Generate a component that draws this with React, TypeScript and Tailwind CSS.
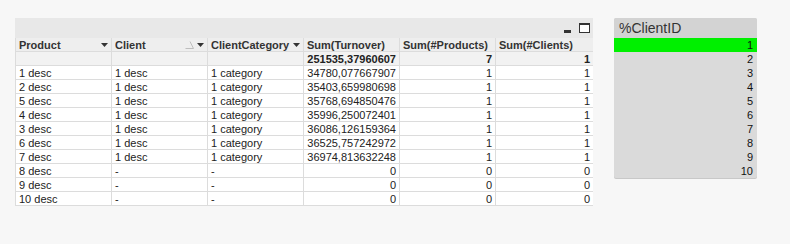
import React from "react";

const rows = [
  ["1 desc", "1 desc", "1 category", "34780,077667907", "1", "1"],
  ["2 desc", "1 desc", "1 category", "35403,659980698", "1", "1"],
  ["5 desc", "1 desc", "1 category", "35768,694850476", "1", "1"],
  ["4 desc", "1 desc", "1 category", "35996,250072401", "1", "1"],
  ["3 desc", "1 desc", "1 category", "36086,126159364", "1", "1"],
  ["6 desc", "1 desc", "1 category", "36525,757242972", "1", "1"],
  ["7 desc", "1 desc", "1 category", "36974,813632248", "1", "1"],
  ["8 desc", "-", "-", "0", "0", "0"],
  ["9 desc", "-", "-", "0", "0", "0"],
  ["10 desc", "-", "-", "0", "0", "0"],
];

const cols = "grid grid-cols-[96px_96px_96px_96px_96px_97px]";

function DropArrow() {
  return (
    <svg width="7" height="4" viewBox="0 0 7 4" className="shrink-0">
      <path d="M0 0h7L3.5 4z" fill="#333" />
    </svg>
  );
}

function SortMark() {
  return (
    <svg width="9" height="8" viewBox="0 0 9 8" className="shrink-0 mr-[3px]">
      <path d="M0.5 7.5h8L5 0.5" fill="none" stroke="#bdbdbd" strokeWidth="1" />
    </svg>
  );
}

function HeadCell({ label, arrow, sort, last }: { label: string; arrow?: boolean; sort?: boolean; last?: boolean }) {
  return (
    <div
      className={`flex items-center h-[14px] pl-[3px] pr-[3px] border-b border-[#dcdcdc] ${last ? "" : "border-r"} font-bold text-[#333] overflow-hidden whitespace-nowrap`}
    >
      <span className="flex-1 truncate">{label}</span>
      {sort && <SortMark />}
      {arrow && <DropArrow />}
    </div>
  );
}

export default function App() {
  return (
    <div
      className="w-[790px] h-[244px] bg-[#f7f7f7] flex items-start gap-[21px] pl-[15px] pt-[18px] text-[11px] leading-[14px] text-[#222]"
      style={{ fontFamily: "Tahoma, 'Liberation Sans', Arial, sans-serif" }}
    >
      {/* straight table */}
      <div className="w-[578px] flex flex-col">
        <div className="h-[20px] bg-[#e8e8e8] flex items-center justify-end gap-[8px] pr-[3px]">
          <div className="w-[7px] h-[3px] bg-[#333] mt-[7px]" />
          <div className="w-[11px] h-[10px] border border-[#333] border-t-2 bg-white" />
        </div>
        <div className="border-l border-[#dcdcdc]">
          <div className={`${cols} bg-[#eeeeee]`}>
            <HeadCell label="Product" arrow />
            <HeadCell label="Client" arrow sort />
            <HeadCell label="ClientCategory" arrow />
            <HeadCell label="Sum(Turnover)" />
            <HeadCell label="Sum(#Products)" />
            <HeadCell label="Sum(#Clients)" last />
          </div>
          <div className={`${cols} bg-[#f2f2f2] font-bold text-[#222]`}>
            <div className="h-[14px] border-b border-r border-[#dcdcdc]" />
            <div className="h-[14px] border-b border-r border-[#dcdcdc]" />
            <div className="h-[14px] border-b border-r border-[#dcdcdc]" />
            <div className="h-[14px] border-b border-r border-[#dcdcdc] text-right pr-[3px]">251535,37960607</div>
            <div className="h-[14px] border-b border-r border-[#dcdcdc] text-right pr-[3px]">7</div>
            <div className="h-[14px] border-b border-[#dcdcdc] text-right pr-[3px]">1</div>
          </div>
          {rows.map((r, i) => (
            <div key={i} className={`${cols} bg-white`}>
              {r.map((c, j) => (
                <div
                  key={j}
                  className={`h-[14px] border-b border-[#dcdcdc] whitespace-nowrap ${j < 5 ? "border-r" : ""} ${j >= 3 ? "text-right pr-[3px]" : "pl-[3px]"}`}
                >
                  {c}
                </div>
              ))}
            </div>
          ))}
        </div>
      </div>

      {/* list box */}
      <div className="w-[143px] flex flex-col rounded-[2px] overflow-hidden bg-[#dadada] shadow-[0_1px_0_#c8c8c8]">
        <div className="h-[20px] bg-[#d3d3d3] flex items-center pl-[5px] text-[14px] text-[#333]">%ClientID</div>
        {Array.from({ length: 10 }, (_, i) => (
          <div
            key={i}
            className={`h-[14px] text-right pr-[4px] text-[#111] ${i === 0 ? "bg-[#00f000]" : ""}`}
          >
            {i + 1}
          </div>
        ))}
      </div>
    </div>
  );
}
